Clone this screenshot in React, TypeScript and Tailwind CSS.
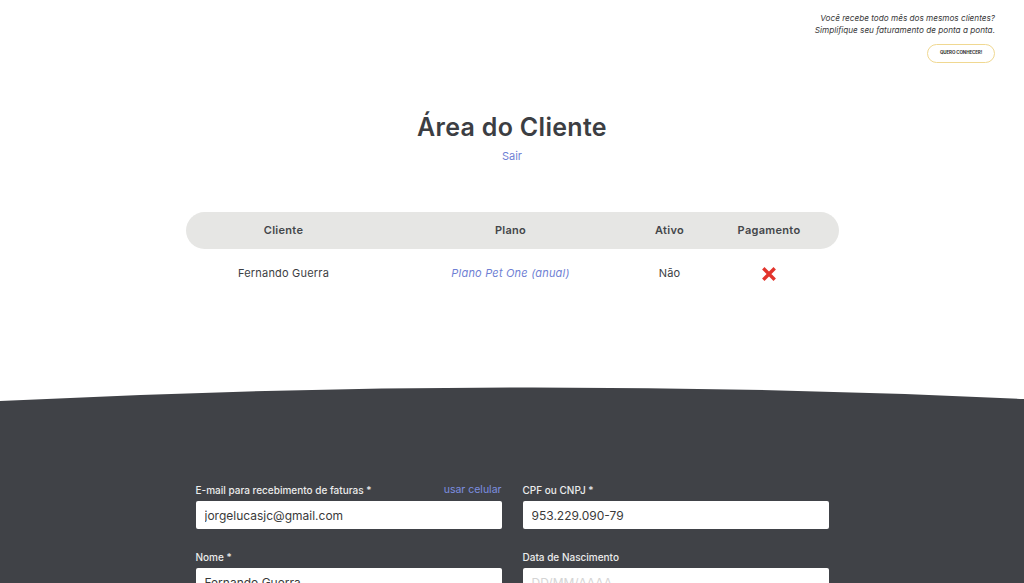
import React from "react";

const font = "font-['Inter','Noto_Sans',sans-serif]";

function RedX() {
  return (
    <svg width="14" height="14" viewBox="0 0 14 14" className="inline-block">
      <path d="M2.5 2.5 L11.5 11.5 M11.5 2.5 L2.5 11.5" stroke="#e2342c" strokeWidth="3.4" strokeLinecap="square" />
    </svg>
  );
}

function Field({ label, value, placeholder, extra }: { label: string; value?: string; placeholder?: string; extra?: string }) {
  return (
    <div className="flex flex-col">
      <div className="flex items-center justify-between leading-[14px] text-[10px] text-[#ececec] font-medium">
        <span>{label}</span>
        {extra && <span className="text-[#7d8fe0] text-[10.5px] font-normal">{extra}</span>}
      </div>
      <input
        readOnly
        value={value ?? ""}
        placeholder={placeholder}
        className="mt-[4px] h-[28px] w-full rounded-[2px] bg-white px-[9px] text-[12px] text-[#3a3a3a] placeholder:text-[#d4d4d4] outline-none"
      />
    </div>
  );
}

export default function App() {
  return (
    <div className={`min-h-screen bg-white ${font}`}>
      <header className="flex flex-col items-end pt-[12px] pr-[29px]">
        <p className="text-right text-[8.2px] italic leading-[12px] text-[#3a3a3a]">
          Você recebe todo mês dos mesmos clientes?
          <br />
          Simplifique seu faturamento de ponta a ponta.
        </p>
        <button className="mt-[8px] flex h-[19px] w-[68px] items-center justify-center rounded-full border border-[#f0d891] text-[4.5px] font-bold tracking-tight text-[#333]">
          QUERO CONHECER!
        </button>
      </header>

      <h1 className="mt-[48px] text-center text-[25px] font-semibold leading-[32px] tracking-[0.3px] text-[#3c3e43]">Área do Cliente</h1>
      <p className="mt-[5px] text-center text-[11px] leading-[16px] text-[#6f7fd4]">Sair</p>

      <div className="mx-auto mt-[48px] w-[653px]">
        <div className="grid h-[37px] grid-cols-[196px_258px_60px_139px] items-center rounded-full bg-[#e6e6e4] text-center text-[11px] font-semibold tracking-[0.3px] text-[#44464a]">
          <span>Cliente</span>
          <span>Plano</span>
          <span>Ativo</span>
          <span>Pagamento</span>
        </div>
        <div className="grid h-[49px] grid-cols-[196px_258px_60px_139px] items-center text-center text-[11px] tracking-[0.2px] text-[#3c3e43]">
          <span>Fernando Guerra</span>
          <span className="italic text-[#6f7fd4]">Plano Pet One (anual)</span>
          <span>Não</span>
          <span className="flex justify-center">
            <RedX />
          </span>
        </div>
      </div>

      <section className="mt-[88px]">
        <svg className="block h-[15px] w-full" viewBox="0 0 1024 15" preserveAspectRatio="none">
          <path d="M0 15 Q512 -11 1024 13 V15 Z" fill="#404247" />
        </svg>
        <div className="bg-[#404247] pb-[60px] pt-[82px]">
          <div className="mx-auto grid w-[633px] grid-cols-2 gap-x-[21px] gap-y-[21px]">
            <Field label="E-mail para recebimento de faturas *" value="jorgelucasjc@gmail.com" extra="usar celular" />
            <Field label="CPF ou CNPJ *" value="953.229.090-79" />
            <Field label="Nome *" value="Fernando Guerra" />
            <Field label="Data de Nascimento" placeholder="DD/MM/AAAA" />
          </div>
        </div>
      </section>
    </div>
  );
}
